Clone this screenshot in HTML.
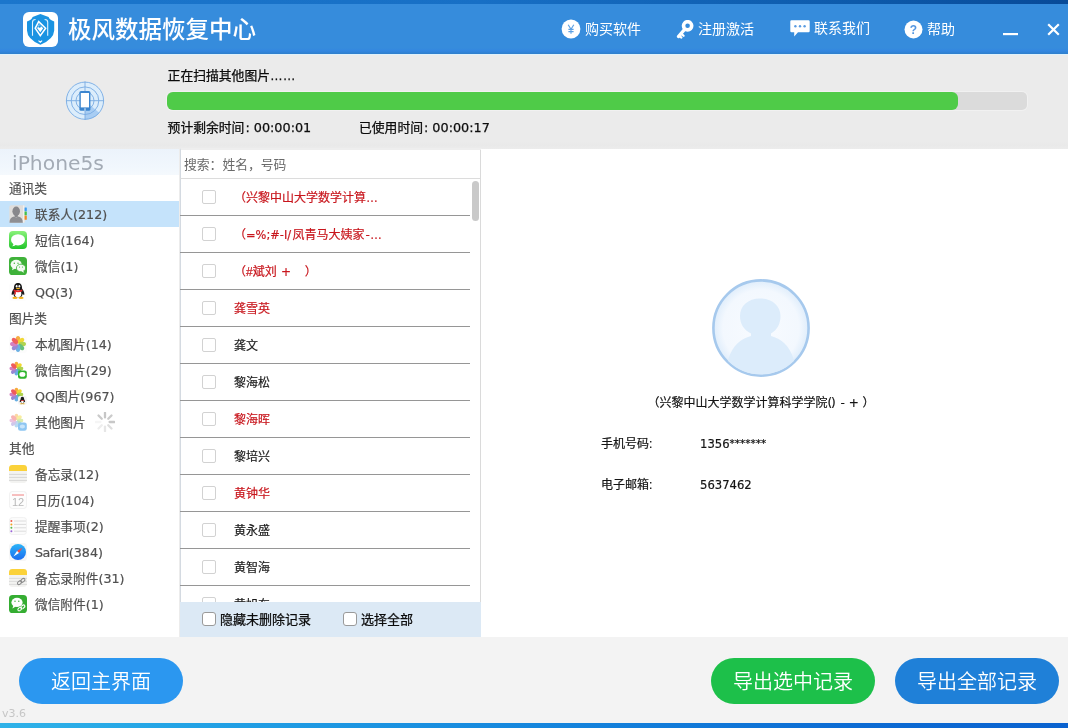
<!DOCTYPE html>
<html lang="zh-CN">
<head>
<meta charset="utf-8">
<title>极风数据恢复中心</title>
<style>
*{box-sizing:border-box;margin:0;padding:0}
html,body{width:1068px;height:728px;overflow:hidden;background:#ececec}
body{position:relative;font-family:"Liberation Sans","Noto Sans CJK SC",sans-serif;font-size:12.8px;color:#222}
#wrap{position:absolute;left:0;top:0;width:1068px;height:728px;will-change:transform}
.abs{position:absolute}
svg{display:block}
.lat{font-family:"DejaVu Sans","Liberation Sans","Noto Sans CJK SC",sans-serif}
#topdark{left:0;top:0;width:1068px;height:4px;background:linear-gradient(90deg,#1b76cc 0%,#176fc5 45%,#0d5aab 80%,#084a98 100%)}
#header{left:0;top:3px;width:1068px;height:52px;background:linear-gradient(180deg,#368cdc 0,#368cdc 45px,#3386e0 48px,#2f7fcb 51px);border-bottom:1px solid #dff1fb}
#logo{left:23px;top:12px;width:35px;height:35px;background:#fff;border-radius:6px}
#title{left:68px;top:13px;height:34px;line-height:34px;font-size:23.5px;font-weight:500;color:#fff;white-space:nowrap}
.menu{top:18px;height:22px;line-height:22px;font-size:14px;color:#fff;white-space:nowrap}
#scan{left:0;top:55px;width:1068px;height:94px;background:linear-gradient(180deg,#ebebeb 0,#ebebeb 87px,#e9e9e9 90px,#ececec 94px)}
.t{white-space:nowrap;line-height:16px;height:16px;color:#0c0c0c;-webkit-text-stroke:0.25px #0c0c0c}
#bar{left:167px;top:92px;width:860px;height:18px;border-radius:5px;background:#dbdbdb;box-shadow:0 0 0 1px rgba(255,255,255,.3)}
#barfill{left:167px;top:92px;width:791px;height:18px;border-radius:6px;background:#4fcb48}
#side{left:0;top:149px;width:179px;height:488px;background:#fff}
#sidehead{left:0;top:149px;width:179px;height:26px;background:linear-gradient(180deg,#ecf3fb,#f1f7fd 70%,#f5f9fd)}
#devname{left:12px;top:149px;height:28px;line-height:28px;font-size:20.3px;color:#a3abb5;white-space:nowrap}
.srow{left:0;width:179px;height:26px;line-height:26px;color:#505050;-webkit-text-stroke:0.2px;font-size:12.7px;white-space:nowrap}
.srow.sel{background:#c5e3fb}
.srow .lb{position:absolute;left:35px;top:1px}
.srow .cat{position:absolute;left:9px;top:1px}
.srow .ic{position:absolute;left:9px;top:4px;width:18px;height:18px}
#list{left:179.5px;top:148px;width:302px;height:489px;background:#fff;border-left:1px solid #d4dae1;border-top:2px solid #eeeeee}
#search{left:184px;top:155px;height:20px;line-height:20px;color:#6a6a6a;font-size:12.8px;white-space:nowrap}
.line{left:180px;width:290px;height:1px;background:#969696}
.cb{width:14px;height:14px;border:1px solid #d2d2d2;border-radius:2px;background:#fff}
.nm{height:20px;line-height:20px;font-size:12px;white-space:nowrap;color:#1a1a1a;-webkit-text-stroke:0.2px}
.red{color:#c8161d}
#listfoot{left:180px;top:602px;width:301px;height:35px;background:#dce9f5}
.cb2{width:14px;height:14px;border:1px solid #9a9a9a;border-radius:3px;background:#fff}
#main{left:481px;top:149px;width:587px;height:488px;background:#fff}
.dt{height:18px;line-height:18px;font-size:12px;white-space:nowrap;color:#141414;-webkit-text-stroke:0.2px}
#bottom{left:0;top:637px;width:1068px;height:87px;background:#f3f3f3}
#strip{left:0;top:723px;width:1068px;height:5px;background:linear-gradient(90deg,#2fb2e8 0%,#22a2e5 18%,#1586dd 50%,#0c6bd3 80%,#0a62cf 100%)}
.btn{top:658px;width:164px;height:46px;border-radius:23px;color:#fff;font-size:20px;line-height:48px;text-align:center;font-family:"Liberation Sans","Noto Sans CJK SC",sans-serif;font-weight:350;white-space:nowrap}
</style>
</head>
<body>
<div id="wrap">
<div class="abs" id="header"></div>
<div class="abs" id="topdark"></div>
<div class="abs" id="logo"><svg width="35" height="35" viewBox="0 0 35 35"><path d="M17.4 1.9 L9.6 5 Q9 7.8 4 9.4 L4 18.5 Q4.3 27.4 17.4 32.7 Q30.7 27.4 31.2 18.5 L31.2 9.4 Q26.2 7.8 25.6 5 Z" fill="#1a93e2"/><path d="M9.5 23.8 V10.2 Q9.5 7.5 12.6 7.5 M21.6 7.5 Q24.7 7.5 24.7 10.2 V23.8" fill="none" stroke="#e4f2fc" stroke-width="1.1"/><path d="M15.7 9.6 L22.6 16.3 L17.3 23.6 L12.2 16.3 Z" fill="none" stroke="#fff" stroke-width="1.5"/><path d="M16 12.2 L20.2 16.2 L17.3 20.2 L14.2 16.2 Z" fill="#fff"/><circle cx="16.6" cy="14.4" r="1.25" fill="#1a93e2"/><path d="M15.5 28.6 L17.3 30.1 L19.1 28.6" fill="none" stroke="#fff" stroke-width="1.2"/></svg></div>
<div class="abs" id="title">极风数据恢复中心</div>

<div class="abs" style="left:561px;top:19px;width:20px;height:20px"><svg width="20" height="20" viewBox="0 0 20 20"><circle cx="10" cy="10" r="9.4" fill="#fff"/><path d="M7.2 5.8 L10 10.2 L12.8 5.8 M10 10.2 V14.8 M7.4 10.4 H12.6 M7.4 12.6 H12.6" fill="none" stroke="#5b9fe3" stroke-width="1.15"/></svg></div>
<div class="abs menu" style="left:585px">购买软件</div>
<div class="abs" style="left:676px;top:20px;width:19px;height:19px"><svg width="19" height="19" viewBox="0 0 19 19"><circle cx="11.6" cy="5.8" r="4.1" fill="none" stroke="#fff" stroke-width="3.6"/><path d="M8.4 9.6 L2.4 16.6" fill="none" stroke="#fff" stroke-width="3.2" stroke-linecap="round"/><path d="M5.2 13.6 L7.6 15.8 M3.4 15.8 L5.4 17.6" fill="none" stroke="#fff" stroke-width="2.2" stroke-linecap="round"/></svg></div>
<div class="abs menu" style="left:698px">注册激活</div>
<div class="abs" style="left:790px;top:20px;width:20px;height:17px"><svg width="20" height="17" viewBox="0 0 20 17"><path d="M1.5 0.3 H18.5 Q19.7 0.3 19.7 1.5 V11 Q19.7 12.2 18.5 12.2 H8 L4.2 16.4 V12.2 H1.5 Q0.3 12.2 0.3 11 V1.5 Q0.3 0.3 1.5 0.3 Z" fill="#fff"/><circle cx="5.4" cy="6.3" r="1.2" fill="#5a9ce2"/><circle cx="10" cy="6.3" r="1.2" fill="#5a9ce2"/><circle cx="14.6" cy="6.3" r="1.2" fill="#5a9ce2"/></svg></div>
<div class="abs menu" style="left:814px;top:17px">联系我们</div>
<div class="abs" style="left:904px;top:20px;width:19px;height:19px"><svg width="19" height="19" viewBox="0 0 19 19"><circle cx="9.5" cy="9.5" r="9" fill="#fff"/><text x="9.5" y="14" text-anchor="middle" font-family="Liberation Sans, sans-serif" font-weight="bold" font-size="12" fill="#5496e0">?</text></svg></div>
<div class="abs menu" style="left:927px">帮助</div>
<div class="abs" style="left:1003px;top:33px;width:15px;height:2px;background:#fff;box-shadow:0 0.5px 0 rgba(255,255,255,.35)"></div>
<div class="abs" style="left:1047px;top:23px;width:13px;height:13px"><svg width="13" height="13" viewBox="0 0 13 13"><path d="M1.2 1.2 L11.8 11.8 M11.8 1.2 L1.2 11.8" stroke="#fff" stroke-width="2.2" fill="none"/></svg></div>

<div class="abs" id="scan"></div>
<div class="abs" style="left:63.5px;top:79.8px;width:42px;height:42px"><svg width="42" height="42" viewBox="0 0 42 42"><defs><clipPath id="rc"><circle cx="21" cy="20.7" r="19"/></clipPath></defs><circle cx="21" cy="20.7" r="19" fill="#dcedfb"/><path d="M21 20.7 L21 40 A19 19 0 0 0 35.5 33 Z" fill="#a8cdf3" clip-path="url(#rc)"/><g fill="none" stroke="#78aae2" stroke-width="0.9"><circle cx="21" cy="20.7" r="18.6"/><circle cx="21" cy="20.7" r="13.8"/><circle cx="21" cy="20.7" r="9"/><path d="M21 1.5 V40 M2 20.7 H40"/></g><rect x="15.4" y="11" width="11" height="19.8" rx="1.6" fill="#3b85cf"/><rect x="16.8" y="13" width="8.2" height="14.4" fill="#fff"/><rect x="20.4" y="28.2" width="1.2" height="2.6" fill="#cfe4f8"/></svg></div>
<div class="abs t" style="left:167.6px;top:68px">正在扫描其他图片……</div>
<div class="abs" id="bar"></div>
<div class="abs" id="barfill"></div>
<div class="abs t" style="left:167.6px;top:120px">预计剩余时间<span class="lat" style="margin-left:1px">: 00:00:01</span></div>
<div class="abs t" style="left:359px;top:120px">已使用时间<span class="lat" style="margin-left:1px">: 00:00:17</span></div>

<div class="abs" id="side"></div>
<div class="abs" id="sidehead"></div>
<div class="abs lat" id="devname">iPhone5s</div>
<div class="abs srow" style="top:175px"><span class="cat">通讯类</span></div>
<div class="abs srow sel" style="top:201px"><span class="ic"><svg width="18" height="18" viewBox="0 0 18 18"><rect x="0.3" y="0.2" width="16" height="17.6" rx="1.8" fill="#e0dedc"/><rect x="15.2" y="2.6" width="2.6" height="3.6" rx="0.5" fill="#3d9cf0"/><rect x="15.2" y="6.6" width="2.6" height="3.6" rx="0.5" fill="#44c04a"/><rect x="15.2" y="10.6" width="2.6" height="4.2" rx="0.5" fill="#f08a24"/><rect x="14" y="0.4" width="1.4" height="17.2" fill="#f1f0ef"/><ellipse cx="7.2" cy="6.3" rx="3.8" ry="4.7" fill="#88888c"/><path d="M0.500 17.8 Q0.500 12.6 5 11.600 L7.2 13 L9.400 11.600 Q13.8 12.6 13.8 17.8 Z" fill="#8e8e92"/><rect x="5.6" y="9.6" width="3.2" height="3" fill="#88888c"/></svg></span><span class="lb">联系人<span class="lat">(212)</span></span></div>
<div class="abs srow" style="top:227px"><span class="ic"><svg width="18" height="18" viewBox="0 0 18 18"><defs><linearGradient id="gs" x1="0" y1="0" x2="0" y2="1"><stop offset="0" stop-color="#8af27a"/><stop offset="1" stop-color="#22c42a"/></linearGradient></defs><rect width="18" height="18" rx="4" fill="url(#gs)"/><ellipse cx="9" cy="8.8" rx="7" ry="5.6" fill="#fff"/><path d="M4.600 12.4 Q4.400 14.4 3 15.2 Q5.800 15.200 7.400 13.600 Z" fill="#fff"/></svg></span><span class="lb">短信<span class="lat">(164)</span></span></div>
<div class="abs srow" style="top:253px"><span class="ic"><svg width="18" height="18" viewBox="0 0 18 18"><rect width="18" height="18" rx="3.6" fill="#3fb23a"/><ellipse cx="7.2" cy="7.400" rx="5.6" ry="4.6" fill="#f4fbf3"/><path d="M3.800 10.400 L3 13.200 L6.200 11.600 Z" fill="#f4fbf3"/><ellipse cx="12" cy="11" rx="4.6" ry="3.8" fill="#f4fbf3" stroke="#3fb23a" stroke-width="0.8"/><path d="M14.200 13.800 L15.200 15.800 L12.400 14.600 Z" fill="#f4fbf3"/><circle cx="5.300" cy="6.200" r="0.7" fill="#3fb23a"/><circle cx="9" cy="6.200" r="0.7" fill="#3fb23a"/><circle cx="10.500" cy="10" r="0.6" fill="#3fb23a"/><circle cx="13.500" cy="10" r="0.6" fill="#3fb23a"/></svg></span><span class="lb">微信<span class="lat">(1)</span></span></div>
<div class="abs srow" style="top:279px"><span class="ic"><svg width="18" height="18" viewBox="0 0 18 18"><rect width="18" height="18" rx="3" fill="#fdfdfd"/><g transform="translate(9 16) scale(1.12) translate(-9 -16)"><path d="M9 1.6 C6.2 1.6 5.2 4 5.4 6.6 C4.2 8 3 10.4 3.4 12.2 C3.8 12.6 4.4 12 4.8 11.4 C5 12.8 5.6 13.6 6.4 14.4 H11.6 C12.4 13.6 13 12.8 13.2 11.4 C13.6 12 14.2 12.6 14.6 12.2 C15 10.4 13.8 8 12.6 6.6 C12.8 4 11.8 1.6 9 1.6 Z" fill="#1a1a1a"/><ellipse cx="9" cy="11.4" rx="3" ry="3.2" fill="#fff"/><path d="M5.2 7.6 Q9 9.4 12.8 7.6 L13 9 Q9 10.8 5 9 Z" fill="#e8262a"/><path d="M6 9.2 L5.6 12 L7 12 L7.2 9.6 Z" fill="#e8262a"/><ellipse cx="6.3" cy="15" rx="2.3" ry="1" fill="#f4b21a"/><ellipse cx="11.7" cy="15" rx="2.3" ry="1" fill="#f4b21a"/><ellipse cx="7.8" cy="4.6" rx="0.8" ry="1.1" fill="#fff"/><ellipse cx="10.2" cy="4.6" rx="0.8" ry="1.1" fill="#fff"/><ellipse cx="9" cy="6.6" rx="1.8" ry="0.6" fill="#f4b21a"/></g></svg></span><span class="lb"><span class="lat">QQ</span><span class="lat">(3)</span></span></div>
<div class="abs srow" style="top:305px"><span class="cat">图片类</span></div>
<div class="abs srow" style="top:331px"><span class="ic"><svg width="18" height="18" viewBox="0 0 18 18"><rect width="18" height="18" rx="3.6" fill="#fcfcfc"/><g transform="translate(9 9)" opacity="0.88"><ellipse cx="0" cy="-4.3" rx="2.3" ry="3.7" fill="#f6a128"/><ellipse cx="0" cy="-4.3" rx="2.3" ry="3.7" fill="#f0d418" transform="rotate(45)"/><ellipse cx="0" cy="-4.3" rx="2.3" ry="3.7" fill="#a6ce3a" transform="rotate(90)"/><ellipse cx="0" cy="-4.3" rx="2.3" ry="3.7" fill="#52b86a" transform="rotate(135)"/><ellipse cx="0" cy="-4.3" rx="2.3" ry="3.7" fill="#58a6e0" transform="rotate(180)"/><ellipse cx="0" cy="-4.3" rx="2.3" ry="3.7" fill="#8c7bd0" transform="rotate(225)"/><ellipse cx="0" cy="-4.3" rx="2.3" ry="3.7" fill="#d070b8" transform="rotate(270)"/><ellipse cx="0" cy="-4.3" rx="2.3" ry="3.7" fill="#ee4a4a" transform="rotate(315)"/></g></svg></span><span class="lb">本机图片<span class="lat">(14)</span></span></div>
<div class="abs srow" style="top:357px"><span class="ic"><svg width="18" height="18" viewBox="0 0 18 18"><g transform="translate(7.4 7.6) scale(0.86)" opacity="0.9"><ellipse cx="0" cy="-4.3" rx="2.3" ry="3.7" fill="#f6a128"/><ellipse cx="0" cy="-4.3" rx="2.3" ry="3.7" fill="#f0d418" transform="rotate(45)"/><ellipse cx="0" cy="-4.3" rx="2.3" ry="3.7" fill="#a6ce3a" transform="rotate(90)"/><ellipse cx="0" cy="-4.3" rx="2.3" ry="3.7" fill="#52b86a" transform="rotate(135)"/><ellipse cx="0" cy="-4.3" rx="2.3" ry="3.7" fill="#58a6e0" transform="rotate(180)"/><ellipse cx="0" cy="-4.3" rx="2.3" ry="3.7" fill="#8c7bd0" transform="rotate(225)"/><ellipse cx="0" cy="-4.3" rx="2.3" ry="3.7" fill="#d070b8" transform="rotate(270)"/><ellipse cx="0" cy="-4.3" rx="2.3" ry="3.7" fill="#ee4a4a" transform="rotate(315)"/></g><rect x="9" y="9.4" width="8.8" height="8.4" rx="2.2" fill="#2fb52e"/><ellipse cx="13.4" cy="13.4" rx="3" ry="2.3" fill="#fff"/></svg></span><span class="lb">微信图片<span class="lat">(29)</span></span></div>
<div class="abs srow" style="top:383px"><span class="ic"><svg width="18" height="18" viewBox="0 0 18 18"><g transform="translate(7.4 7.6) scale(0.86)" opacity="0.9"><ellipse cx="0" cy="-4.3" rx="2.3" ry="3.7" fill="#f6a128"/><ellipse cx="0" cy="-4.3" rx="2.3" ry="3.7" fill="#f0d418" transform="rotate(45)"/><ellipse cx="0" cy="-4.3" rx="2.3" ry="3.7" fill="#a6ce3a" transform="rotate(90)"/><ellipse cx="0" cy="-4.3" rx="2.3" ry="3.7" fill="#52b86a" transform="rotate(135)"/><ellipse cx="0" cy="-4.3" rx="2.3" ry="3.7" fill="#58a6e0" transform="rotate(180)"/><ellipse cx="0" cy="-4.3" rx="2.3" ry="3.7" fill="#8c7bd0" transform="rotate(225)"/><ellipse cx="0" cy="-4.3" rx="2.3" ry="3.7" fill="#d070b8" transform="rotate(270)"/><ellipse cx="0" cy="-4.3" rx="2.3" ry="3.7" fill="#ee4a4a" transform="rotate(315)"/></g><rect x="9" y="9" width="8.8" height="8.8" rx="2" fill="#f4f4f4"/><path d="M13.4 9.8 C12 9.8 11.6 11 11.7 12.2 C11 13 10.5 14.2 10.8 15.2 L11.6 14.8 C11.8 15.6 12.2 16.2 12.6 16.4 H14.2 C14.6 16.2 15 15.6 15.2 14.8 L16 15.2 C16.3 14.2 15.8 13 15.1 12.2 C15.2 11 14.8 9.8 13.4 9.8 Z" fill="#1a1a1a"/><ellipse cx="13.4" cy="14.8" rx="1.3" ry="1.5" fill="#fff"/><path d="M11.6 12.8 Q13.4 13.8 15.2 12.8 L15.2 13.6 Q13.4 14.4 11.6 13.6 Z" fill="#e8262a"/><ellipse cx="12.2" cy="16.8" rx="1.1" ry="0.5" fill="#f4b21a"/><ellipse cx="14.6" cy="16.8" rx="1.1" ry="0.5" fill="#f4b21a"/></svg></span><span class="lb"><span class="lat">QQ</span>图片<span class="lat">(967)</span></span></div>
<div class="abs srow" style="top:409px"><span class="ic"><svg width="18" height="18" viewBox="0 0 18 18"><g transform="translate(7.4 7.6) scale(0.86)" opacity="0.42"><ellipse cx="0" cy="-4.3" rx="2.3" ry="3.7" fill="#f6a128"/><ellipse cx="0" cy="-4.3" rx="2.3" ry="3.7" fill="#f0d418" transform="rotate(45)"/><ellipse cx="0" cy="-4.3" rx="2.3" ry="3.7" fill="#a6ce3a" transform="rotate(90)"/><ellipse cx="0" cy="-4.3" rx="2.3" ry="3.7" fill="#52b86a" transform="rotate(135)"/><ellipse cx="0" cy="-4.3" rx="2.3" ry="3.7" fill="#58a6e0" transform="rotate(180)"/><ellipse cx="0" cy="-4.3" rx="2.3" ry="3.7" fill="#8c7bd0" transform="rotate(225)"/><ellipse cx="0" cy="-4.3" rx="2.3" ry="3.7" fill="#d070b8" transform="rotate(270)"/><ellipse cx="0" cy="-4.3" rx="2.3" ry="3.7" fill="#ee4a4a" transform="rotate(315)"/></g><rect x="9" y="9.4" width="8.8" height="8.4" rx="2.4" fill="#8ec6f2"/><ellipse cx="13.4" cy="13.4" rx="2.6" ry="2" fill="#c8e4fa"/></svg></span><span class="lb">其他图片</span></div>
<div class="abs srow" style="top:435px"><span class="cat">其他</span></div>
<div class="abs srow" style="top:461px"><span class="ic"><svg width="18" height="18" viewBox="0 0 18 18"><rect width="18" height="18" rx="3.4" fill="#f3f3f1"/><path d="M0 6 V3.4 Q0 0 3.4 0 H14.6 Q18 0 18 3.4 V6 Z" fill="#fbd23a"/><path d="M0 9.4 H18 M0 12.4 H18 M0 15.4 H18" stroke="#cfcfcf" stroke-width="0.8"/></svg></span><span class="lb">备忘录<span class="lat">(12)</span></span></div>
<div class="abs srow" style="top:487px"><span class="ic"><svg width="18" height="18" viewBox="0 0 18 18"><rect x="0.4" y="0.4" width="17.2" height="17.2" rx="3.2" fill="#fdfdfd" stroke="#ececec" stroke-width="0.8"/><path d="M3 4 H15" stroke="#f08080" stroke-width="1"/><text x="9" y="15" text-anchor="middle" font-family="Liberation Sans, sans-serif" font-size="11" fill="#b8b8b8">12</text></svg></span><span class="lb">日历<span class="lat">(104)</span></span></div>
<div class="abs srow" style="top:513px"><span class="ic"><svg width="18" height="18" viewBox="0 0 18 18"><rect x="0.4" y="0.4" width="17.2" height="17.2" rx="3.2" fill="#fbfbfb" stroke="#eeeeee" stroke-width="0.8"/><path d="M5 4 H17 M5 7.4 H17 M5 10.8 H17 M5 14.2 H17" stroke="#d8d8d8" stroke-width="0.9"/><circle cx="2.4" cy="4" r="1" fill="#f05a4a"/><circle cx="2.4" cy="7.4" r="1" fill="#f4a020"/><circle cx="2.4" cy="10.8" r="1" fill="#56b84a"/><circle cx="2.4" cy="14.2" r="1" fill="#9a62d8"/></svg></span><span class="lb">提醒事项<span class="lat">(2)</span></span></div>
<div class="abs srow" style="top:539px"><span class="ic"><svg width="18" height="18" viewBox="0 0 18 18"><defs><linearGradient id="gsf" x1="0" y1="0" x2="0" y2="1"><stop offset="0" stop-color="#2ab4f8"/><stop offset="1" stop-color="#1c6cf0"/></linearGradient></defs><rect width="18" height="18" rx="3.6" fill="#f6f6f6"/><circle cx="9" cy="9" r="8" fill="url(#gsf)"/><path d="M13.6 4.4 L8 8 L10 10 Z" fill="#ff4a3a"/><path d="M4.4 13.6 L8 8 L10 10 Z" fill="#fff"/></svg></span><span class="lb"><span class="lat" style="letter-spacing:-0.5px">Safari</span><span class="lat">(384)</span></span></div>
<div class="abs srow" style="top:565px"><span class="ic"><svg width="18" height="18" viewBox="0 0 18 18"><rect width="18" height="18" rx="3.4" fill="#f3f3f1"/><path d="M0 6 V3.4 Q0 0 3.4 0 H14.6 Q18 0 18 3.4 V6 Z" fill="#fbd23a"/><path d="M0 9.4 H18 M0 12.4 H18 M0 15.4 H18" stroke="#d4d4d4" stroke-width="0.8"/><g fill="none" stroke="#8a8a8a" stroke-width="1.1"><ellipse cx="10.6" cy="13.6" rx="2.4" ry="1.5" transform="rotate(-35 10.6 13.6)"/><ellipse cx="13.8" cy="11.4" rx="2.4" ry="1.5" transform="rotate(-35 13.8 11.4)"/></g></svg></span><span class="lb">备忘录附件<span class="lat">(31)</span></span></div>
<div class="abs srow" style="top:591px"><span class="ic"><svg width="18" height="18" viewBox="0 0 18 18"><rect width="18" height="18" rx="3.6" fill="#35ad32"/><ellipse cx="8" cy="7.4" rx="5.6" ry="4.6" fill="#fff"/><path d="M4.4 10.4 L3.4 13.4 L6.8 11.6 Z" fill="#fff"/><circle cx="6" cy="6.2" r="0.7" fill="#35ad32"/><circle cx="9.8" cy="6.2" r="0.7" fill="#35ad32"/><g fill="none" stroke="#fff" stroke-width="1.2"><ellipse cx="10.8" cy="14" rx="2.3" ry="1.4" transform="rotate(-35 10.8 14)"/><ellipse cx="13.8" cy="11.8" rx="2.3" ry="1.4" transform="rotate(-35 13.8 11.8)"/></g><g fill="none" stroke="#35ad32" stroke-width="0.4"><ellipse cx="10.8" cy="14" rx="3.1" ry="2.2" transform="rotate(-35 10.8 14)"/></g></svg></span><span class="lb">微信附件<span class="lat">(1)</span></span></div>
<div class="abs" style="left:95px;top:411.800px;width:20px;height:20px"><svg width="20" height="20" viewBox="0 0 20 20"><g stroke-width="2.3" stroke-linecap="round" transform="translate(10 10)"><path d="M0 -9.2 V-4.6" stroke="#c6c6c6" transform="rotate(0)"/><path d="M0 -9.2 V-4.6" stroke="#cbcbcb" transform="rotate(45)"/><path d="M0 -9.2 V-4.6" stroke="#c8c8c8" transform="rotate(90)"/><path d="M0 -9.2 V-4.6" stroke="#dedede" transform="rotate(135)"/><path d="M0 -9.2 V-4.6" stroke="#e6e6e6" transform="rotate(180)"/><path d="M0 -9.2 V-4.6" stroke="#ededed" transform="rotate(225)"/><path d="M0 -9.2 V-4.6" stroke="#f5f5f5" transform="rotate(270)"/><path d="M0 -9.2 V-4.6" stroke="#cacaca" transform="rotate(315)"/></g></svg></div>

<div class="abs" id="list"></div>
<div class="abs" id="search">搜索：姓名，号码</div>
<div class="abs line" style="top:178px;background:#dcdcdc;width:300px"></div>
<div class="abs cb" style="left:202px;top:190px"></div>
<div class="abs nm red" style="left:234px;top:188px">（兴黎中山大学数学计算…</div>
<div class="abs line" style="top:215px"></div>
<div class="abs cb" style="left:202px;top:227px"></div>
<div class="abs nm red" style="left:234px;top:225px">（<span class="lat" style="font-size:11.4px">=%;#-I/</span><span style="margin-left:1.5px">凤青马大姨家</span><span class="lat" style="margin-left:1px">-</span>…</div>
<div class="abs line" style="top:252px"></div>
<div class="abs cb" style="left:202px;top:264px"></div>
<div class="abs nm red" style="left:234px;top:262px">（#斌刘<span class="lat" style="margin-left:0.6px"> +</span><span style="margin-left:1.5px">　</span>）</div>
<div class="abs line" style="top:289px"></div>
<div class="abs cb" style="left:202px;top:301px"></div>
<div class="abs nm red" style="left:234px;top:299px">龚雪英</div>
<div class="abs line" style="top:326px"></div>
<div class="abs cb" style="left:202px;top:338px"></div>
<div class="abs nm" style="left:234px;top:336px">龚文</div>
<div class="abs line" style="top:363px"></div>
<div class="abs cb" style="left:202px;top:375px"></div>
<div class="abs nm" style="left:234px;top:373px">黎海松</div>
<div class="abs line" style="top:400px"></div>
<div class="abs cb" style="left:202px;top:412px"></div>
<div class="abs nm red" style="left:234px;top:410px">黎海晖</div>
<div class="abs line" style="top:437px"></div>
<div class="abs cb" style="left:202px;top:449px"></div>
<div class="abs nm" style="left:234px;top:447px">黎培兴</div>
<div class="abs line" style="top:474px"></div>
<div class="abs cb" style="left:202px;top:486px"></div>
<div class="abs nm red" style="left:234px;top:484px">黄钟华</div>
<div class="abs line" style="top:511px"></div>
<div class="abs cb" style="left:202px;top:523px"></div>
<div class="abs nm" style="left:234px;top:521px">黄永盛</div>
<div class="abs line" style="top:548px"></div>
<div class="abs cb" style="left:202px;top:560px"></div>
<div class="abs nm" style="left:234px;top:558px">黄智海</div>
<div class="abs line" style="top:585px"></div>
<div class="abs cb" style="left:202px;top:597px"></div>
<div class="abs nm" style="left:234px;top:595px">黄旭东</div>
<div class="abs" style="left:480px;top:150px;width:1px;height:487px;background:#dadada"></div>
<div class="abs" style="left:471.5px;top:180.5px;width:7px;height:40.5px;border-radius:4px;background:#c9c9c9"></div>
<div class="abs" id="listfoot"></div>
<div class="abs cb2" style="left:202px;top:612px"></div>
<div class="abs t" style="left:220px;top:611px;line-height:18px;height:18px;font-size:13px">隐藏未删除记录</div>
<div class="abs cb2" style="left:343px;top:612px"></div>
<div class="abs t" style="left:361px;top:611px;line-height:18px;height:18px;font-size:13px">选择全部</div>

<div class="abs" id="main"></div>
<div class="abs" style="left:711px;top:278px;width:100px;height:100px"><svg width="100" height="100" viewBox="0 0 100 100"><defs><clipPath id="ac"><circle cx="50" cy="50" r="46.5"/></clipPath><radialGradient id="ag" cx="50%" cy="50%" r="50%"><stop offset="0" stop-color="#f8fbff"/><stop offset="0.8" stop-color="#f3f8fe"/><stop offset="1" stop-color="#dfedfb"/></radialGradient></defs><circle cx="50" cy="50" r="47.6" fill="url(#ag)" stroke="#a6c9ed" stroke-width="2.6"/><g clip-path="url(#ac)" fill="#dcecfb"><path d="M49 20.5 C37 20.5 29 28 29 38 C29 46 33 52 40 55.5 L40 58 C30 61 22 66 17 82 L14 100 H86 L83 82 C78 66 70 61 60 58 L60 55.5 C66 52 69.500 46 69.500 38 C69.500 28 61 20.5 49 20.5 Z"/></g></svg></div>
<div class="abs dt" style="left:561px;top:394px;width:400px;text-align:center">（兴黎中山大学数学计算科学学院<span class="lat" style="letter-spacing:-1px">()</span><span class="lat" style="margin-left:2px"> - + </span>）</div>
<div class="abs dt" style="left:601px;top:435px">手机号码:</div>
<div class="abs dt lat" style="left:700px;top:435px;font-size:11.6px">1356<span style="font-size:10.5px;position:relative;top:-1px">*******</span></div>
<div class="abs dt" style="left:601px;top:476px">电子邮箱:</div>
<div class="abs dt lat" style="left:700px;top:476px;font-size:11.6px">5637462</div>

<div class="abs" id="bottom"></div>
<div class="abs" id="strip"></div>
<div class="abs btn" style="left:19px;background:#2b97f0">返回主界面</div>
<div class="abs btn" style="left:711px;background:#1dc04a">导出选中记录</div>
<div class="abs btn" style="left:895px;background:#1f80d8">导出全部记录</div>
<div class="abs lat" style="left:2px;top:706px;font-size:11px;color:#c6c6c6;line-height:16px">v3.6</div>
</div>
</body>
</html>
